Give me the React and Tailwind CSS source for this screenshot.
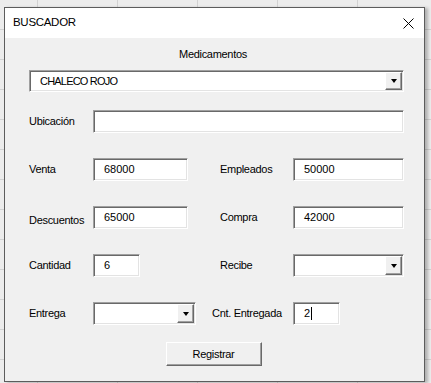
import React from 'react';

// classic win32 sunken / raised edges
const sunken =
    'bg-white border border-t-[#a0a0a0] border-l-[#a0a0a0] border-r-white border-b-white shadow-[inset_1px_1px_0_#696969,inset_-1px_-1px_0_#e3e3e3]';
const raised =
    'bg-[#f0f0f0] border border-t-white border-l-white border-r-[#696969] border-b-[#696969] shadow-[inset_-1px_-1px_0_#a0a0a0]';

const Label = ({ children, width = '', className = '' }) => (
    <div className={`h-[13px] text-[11px] leading-[13px] tracking-[-0.3px] text-black whitespace-nowrap ${width} ${className}`}>
        {children}
    </div>
);

const Field = ({ width, value, caret }) => (
    <div className={`${sunken} h-[23px] flex items-center pl-[10px] text-[11px] leading-[13px] text-black ${width}`}>
        {value}
        {caret && <span className="w-px h-[13px] bg-black ml-[0.5px]"></span>}
    </div>
);

const Combo = ({ width, value, valueClass = '', height = 'h-[23px]' }) => (
    <div className={`${sunken} ${height} flex items-stretch ${width}`}>
        <div className={`flex-1 flex items-center pl-[10px] text-[11px] leading-[13px] text-black ${valueClass}`}>{value}</div>
        <div className={`${raised} w-[17px] my-[1px] mr-[1px] flex items-center justify-center`}>
            <div className="w-0 h-0 border-x-[3.5px] border-x-transparent border-t-[4px] border-t-black"></div>
        </div>
    </div>
);

const Row = ({ children, className = 'mt-[25px]' }) => (
    <div className={`h-[23px] flex items-center ${className}`}>{children}</div>
);

export default function App() {
    return (
        <div className="w-[431px] h-[383px] overflow-hidden bg-[#ececec] bg-[repeating-linear-gradient(to_bottom,transparent_0_29px,#d2d2d2_29px_30px),repeating-linear-gradient(to_right,transparent_0_37px,#d2d2d2_37px_38px,transparent_38px_80px)] pt-[7px] pl-[4px] font-['Liberation_Sans',Arial,sans-serif] leading-none">
            <div className="w-[421px] h-[375px] border border-[#5c5c5c] bg-[#f0f0f0] shadow-[3px_1px_3px_rgba(0,0,0,0.25)] flex flex-col">
                {/* title bar */}
                <div className="h-[30px] shrink-0 bg-white flex items-center justify-between pl-[8px] pr-[10px]">
                    <span className="text-[11.5px] tracking-[-0.3px] text-black">BUSCADOR</span>
                    <svg width="11" height="11" viewBox="0 0 11 11" className="mt-[1px]">
                        <path d="M0.5 0.5 L10.5 10.5 M10.5 0.5 L0.5 10.5" stroke="#000" strokeWidth="1" />
                    </svg>
                </div>

                {/* body */}
                <div className="flex flex-col pl-[24px]">
                    <div className="mt-[9px] h-[14px] flex items-center justify-center pr-[27px]">
                        <Label>Medicamentos</Label>
                    </div>

                    <div className="mt-[9px] h-[22px]">
                        <Combo width="w-[375px]" height="h-[22px]" value="CHALECO ROJO" valueClass="tracking-[-0.8px]" />
                    </div>

                    <Row className="mt-[18px]">
                        <Label width="w-[64px]">Ubicación</Label>
                        <Field width="w-[311px]" value="" />
                    </Row>

                    <Row>
                        <Label width="w-[64px]">Venta</Label>
                        <Field width="w-[95px]" value="68000" />
                        <div className="w-[32px]"></div>
                        <Label width="w-[73px]">Empleados</Label>
                        <Field width="w-[111px]" value="50000" />
                    </Row>

                    <Row>
                        <Label width="w-[64px]" className="translate-y-[3px]">Descuentos</Label>
                        <Field width="w-[95px]" value="65000" />
                        <div className="w-[32px]"></div>
                        <Label width="w-[73px]">Compra</Label>
                        <Field width="w-[111px]" value="42000" />
                    </Row>

                    <Row>
                        <Label width="w-[64px]">Cantidad</Label>
                        <Field width="w-[47px]" value="6" />
                        <div className="w-[80px]"></div>
                        <Label width="w-[73px]">Recibe</Label>
                        <Combo width="w-[111px]" value="" />
                    </Row>

                    <Row>
                        <Label width="w-[64px]">Entrega</Label>
                        <Combo width="w-[103px]" value="" />
                        <div className="w-[16px]"></div>
                        <Label width="w-[81px]">Cnt. Entregada</Label>
                        <Field width="w-[47px]" value="2" caret />
                    </Row>

                    <div className="mt-[17px] flex justify-center pr-[26px]">
                        <button className={`${raised} w-[96px] h-[24px] flex items-center justify-center`}>
                            <Label>Registrar</Label>
                        </button>
                    </div>
                </div>
            </div>
        </div>
    );
}
